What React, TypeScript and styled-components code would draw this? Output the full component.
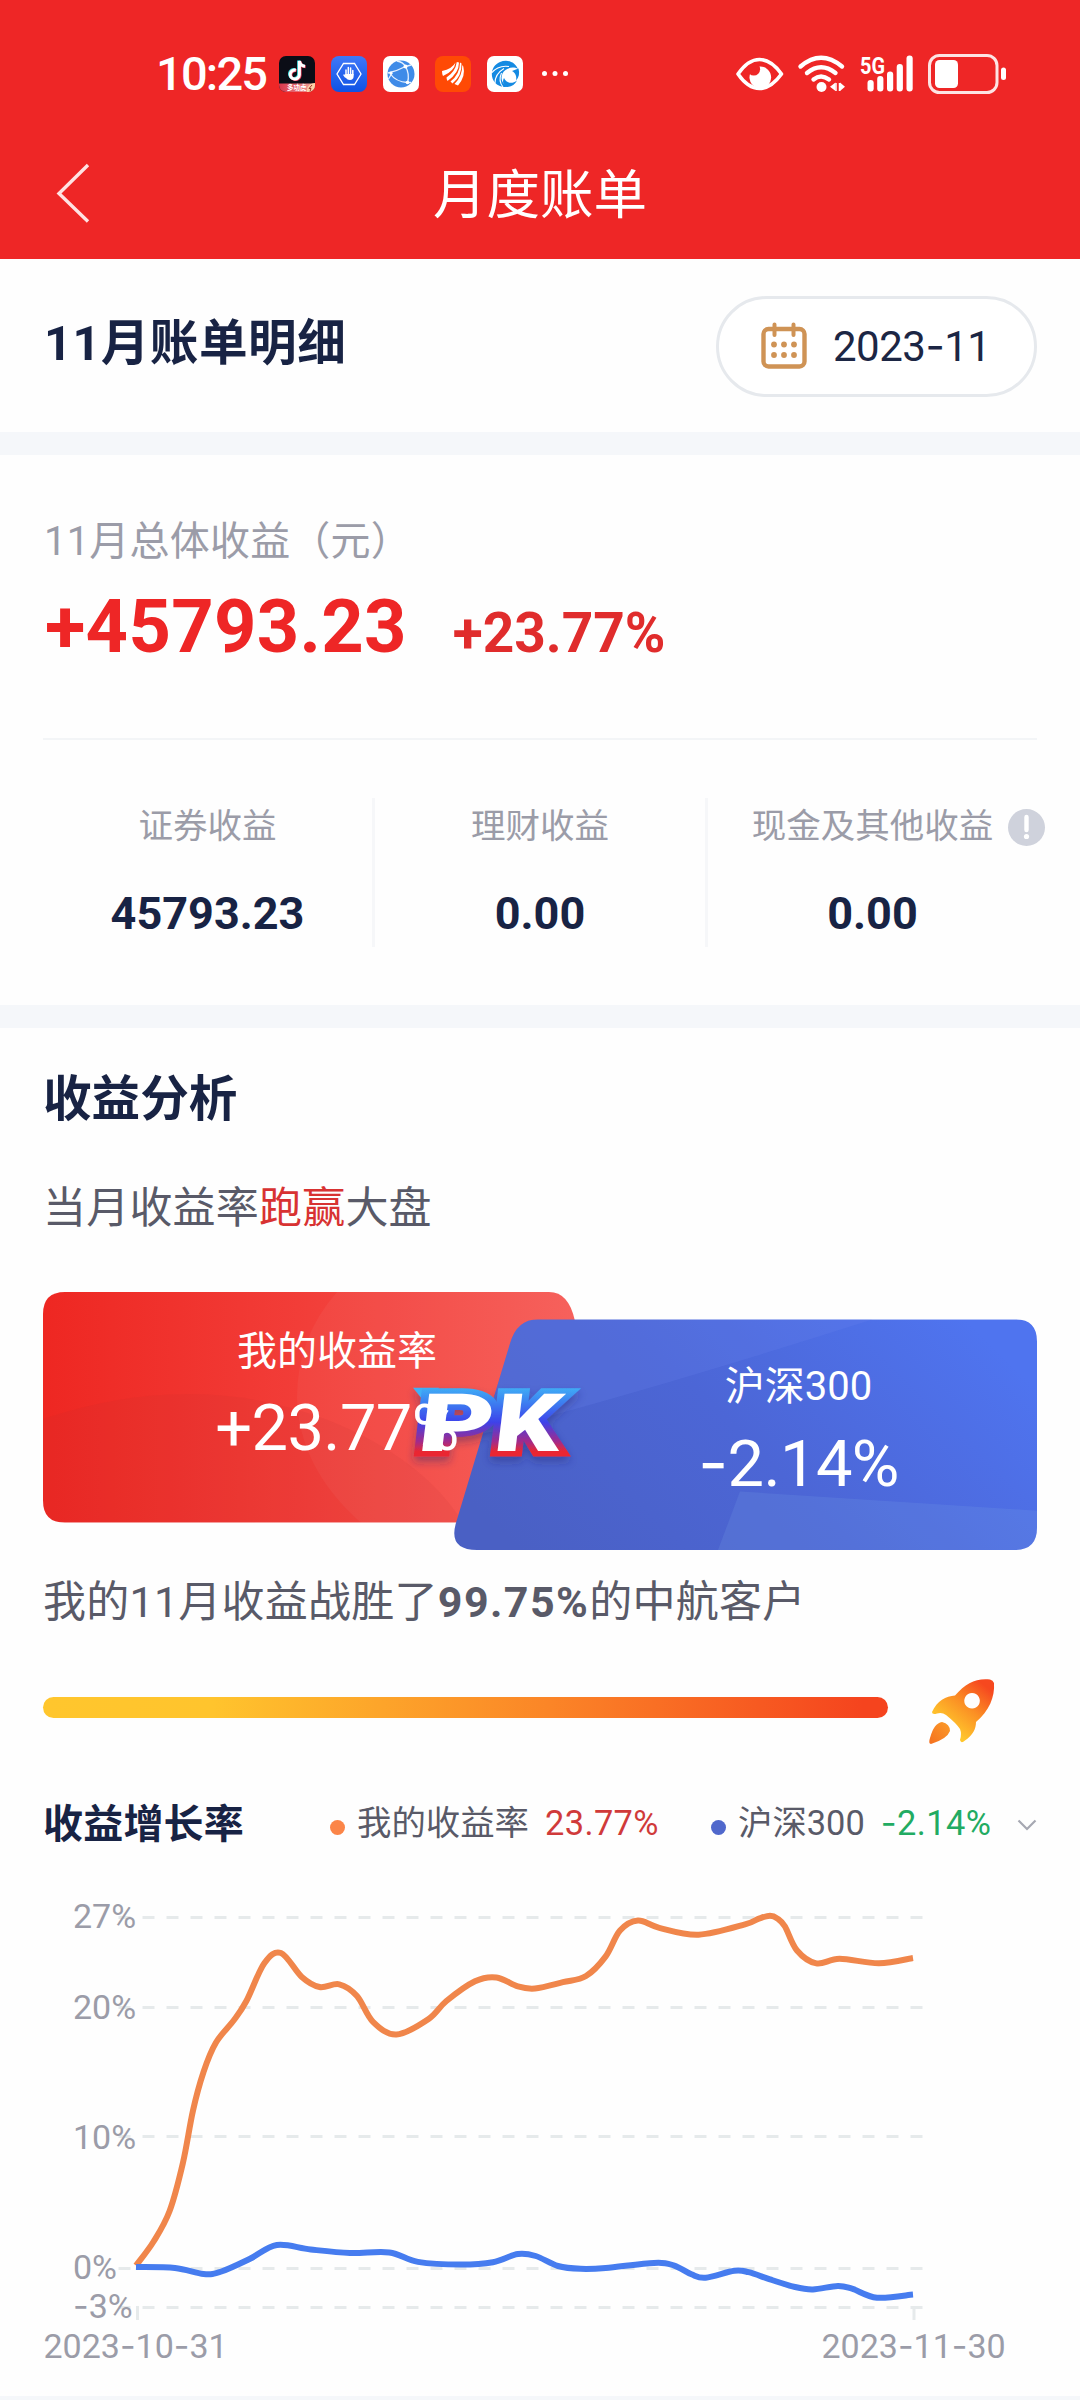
import React from "react";
import styled, { createGlobalStyle } from "styled-components";

const FONT = `Roboto, "Noto Sans CJK SC", sans-serif`;

const GlobalStyle = createGlobalStyle`
  * { box-sizing: border-box; }
  body { margin: 0; background: #fff; font-family: ${FONT}; }
  svg { display: block; flex: none; overflow: visible; }
`;

const Page = styled.main`
  width: 1080px;
  height: 2400px;
  overflow: hidden;
  display: flex;
  flex-direction: column;
  background: #fefefe;
  white-space: nowrap;

  > * { flex: none; }
`;

/* ---------- header ---------- */

const Header = styled.header`
  height: 259px;
  background: #ee2626;
  color: #fff;
`;

const StatusBar = styled.div`
  height: 127px;
  padding: 21px 74px 0 156px;
  display: flex;
  align-items: center;
`;

const Clock = styled.div`
  width: 123px;
  font-size: 47px;
  font-weight: 500;
  letter-spacing: -1.8px;
  line-height: 60px;
`;

const AppIcons = styled.div`
  display: flex;
  align-items: center;
  gap: 16px;
`;

const SystemIcons = styled.div`
  display: flex;
  align-items: center;
  gap: 15px;
  margin-left: auto;
`;

const NavBar = styled.div`
  height: 132px;
  padding: 0 55px;
  display: grid;
  grid-template-columns: 40px 1fr 40px;
  align-items: center;
`;

const NavTitle = styled.h1`
  margin: 5px 0 0;
  font-size: 53.5px;
  font-weight: 400;
  line-height: 70px;
  text-align: center;
`;

/* ---------- shared ---------- */

const Band = styled.div`
  height: 23px;
  background: #f5f7fa;
`;

const Heading = styled.h2<{ $size?: number }>`
  margin: 0;
  font-size: ${(p) => p.$size ?? 48.6}px;
  font-weight: 700;
  line-height: 60px;
  color: #182344;
`;

const DashMark = styled.span`
  font-family: Inter, sans-serif;
`;

/* ---------- month picker ---------- */

const MonthSection = styled.section`
  height: 173px;
  padding: 37px 43px 0 44px;
  display: flex;
  justify-content: space-between;
  align-items: flex-start;

  ${Heading} {
    margin-top: 18px;
    letter-spacing: 0.5px;
  }
`;

const MonthPill = styled.button`
  width: 321px;
  height: 101px;
  padding: 0 0 2px 42px;
  display: flex;
  align-items: center;
  gap: 26px;
  border: 3px solid #e6e9ed;
  border-radius: 51px;
  background: #fff;
  color: #1c2644;
  font-family: ${FONT};
  font-size: 42px;
  letter-spacing: -0.5px;
`;

/* ---------- summary ---------- */

const Summary = styled.section`
  height: 550px;
  padding: 57px 43px 0;
`;

const SummaryLabel = styled.div`
  margin-left: 1px;
  font-size: 40px;
  line-height: 60px;
  letter-spacing: 0.2px;
  color: #9b9ca8;
`;

const AmountRow = styled.div`
  margin: 10px 0 0 2px;
  height: 90px;
  display: flex;
  align-items: baseline;
  gap: 46px;
  font-weight: 700;
`;

const Amount = styled.span`
  font-size: 74px;
  line-height: 90px;
  letter-spacing: 0.3px;
  color: #ee2626;
`;

const Rate = styled.span`
  font-size: 55px;
  color: #e02c2c;
`;

const Stats = styled.div`
  margin-top: 66px;
  padding-top: 58px;
  border-top: 2px solid #f3f5f7;
  display: grid;
  grid-template-columns: 329px 333px 332px;
`;

const Stat = styled.div`
  height: 149px;
  text-align: center;

  & + & { border-left: 3px solid #f6f7f9; }
`;

const StatLabel = styled.div`
  position: relative;
  display: inline-block;
  font-size: 34.5px;
  line-height: 56px;
  color: #9b9ca8;

  svg {
    position: absolute;
    left: calc(100% + 15px);
    top: 11px;
  }
`;

const StatValue = styled.div`
  margin-top: 30px;
  font-size: 45px;
  font-weight: 700;
  line-height: 60px;
  color: #182344;
`;

/* ---------- analysis ---------- */

const Analysis = styled.section`
  padding: 42px 43px 0;
`;

const Sentence = styled.p<{ $top: number; $spacing?: number }>`
  margin: ${(p) => p.$top}px 0 0;
  font-size: 43px;
  line-height: 60px;
  color: #595a68;
  letter-spacing: ${(p) => p.$spacing ?? 0}px;

  b { letter-spacing: 1.4px; }
`;

const Win = styled.span`
  color: #d83232;
`;

const Versus = styled.div`
  position: relative;
  margin-top: 54px;
  height: 258px;
  display: flex;
  color: #fff;
`;

const VersusArt = styled.svg`
  position: absolute;
  inset: 0;
`;

const Side = styled.div<{ $width: number; $top: number; $right?: number }>`
  position: relative;
  width: ${(p) => p.$width}px;
  padding: ${(p) => p.$top}px ${(p) => p.$right ?? 0}px 0 0;
  text-align: center;
`;

const SideLabel = styled.div`
  font-size: 40px;
  line-height: 60px;
`;

const SideValue = styled.div`
  margin-top: 6px;
  font-size: 65px;
  line-height: 80px;
  letter-spacing: -0.6px;
`;

const ProgressRow = styled.div`
  margin-top: 47px;
  height: 65px;
  display: flex;
  align-items: center;
  gap: 41px;
`;

const Progress = styled.div`
  width: 845px;
  height: 21px;
  margin-bottom: 8px;
  border-radius: 11px;
  background: linear-gradient(90deg, #ffc62d 0%, #ffc42d 20%, #fb8527 60%, #f5441e 97%);
`;

const LegendRow = styled.div`
  margin-top: 56px;
  height: 50px;
  display: flex;
  align-items: center;
`;

const LegendTitle = styled(Heading)`
  width: 287px;
  line-height: 50px;
  letter-spacing: 0.2px;
`;

const LegendItem = styled.div<{ $width: number }>`
  width: ${(p) => p.$width}px;
  display: flex;
  align-items: center;
  font-size: 34.4px;
  line-height: 50px;
  color: #595a68;
  margin-top: -5px;
`;

const Dot = styled.i<{ $color: string }>`
  width: 15px;
  height: 15px;
  margin: 10px 12px 0 0;
  border-radius: 50%;
  background: ${(p) => p.$color};
`;

const LegendValue = styled.span<{ $color: string }>`
  margin-left: 16px;
  letter-spacing: 0.4px;
  color: ${(p) => p.$color};
`;

const Chart = styled.svg`
  font-family: ${FONT};
  font-size: 34px;
  fill: #9b9ca8;
`;

/* ---------- helpers ---------- */

function Num({ children }: { children: string }) {
  return (
    <>
      {children.split(/(-)/).map((part, i) =>
        part === "-" ? <DashMark key={i}>-</DashMark> : part
      )}
    </>
  );
}

type Point = [number, number];

function smoothPath(points: Point[]) {
  let d = `M${points[0][0]} ${points[0][1]}`;
  for (let i = 0; i < points.length - 1; i++) {
    const p0 = points[i - 1] ?? points[i];
    const p1 = points[i];
    const p2 = points[i + 1];
    const p3 = points[i + 2] ?? p2;
    const c = [
      p1[0] + (p2[0] - p0[0]) / 6,
      p1[1] + (p2[1] - p0[1]) / 6,
      p2[0] - (p3[0] - p1[0]) / 6,
      p2[1] - (p3[1] - p1[1]) / 6,
    ].map((n) => n.toFixed(1));
    d += `C${c[0]} ${c[1]} ${c[2]} ${c[3]} ${p2[0]} ${p2[1]}`;
  }
  return d;
}

/* ---------- chart data ---------- */

const mine: Point[] = [
  [136, 2265.6], [153.6, 2241.5], [169.6, 2211], [182.9, 2163], [192.9, 2111],
  [203.6, 2071.8], [216, 2042.5], [234, 2020], [246.4, 2001], [264.3, 1963.3],
  [281, 1953], [301.8, 1977], [319.6, 1987], [339.3, 1984.3], [357, 1996],
  [373, 2021.8], [396.4, 2034.5], [428.6, 2019], [446.4, 2001], [475, 1981.2],
  [496.4, 1977.4], [517.9, 1986.4], [535, 1988.5], [562.9, 1982.2], [586, 1976],
  [605.7, 1956.4], [620, 1930.6], [637.9, 1920.6], [659.3, 1927.8], [698.6, 1934.7],
  [745, 1924.4], [759, 1918.6], [770, 1915.8], [777.5, 1918.6], [785, 1926.5],
  [796.8, 1950.2], [816.4, 1963.4], [839.6, 1958.8], [878.9, 1963.3], [913, 1958],
];

const index300: Point[] = [
  [136, 2267], [175, 2268], [203.6, 2274], [221.4, 2271.5], [250, 2258.8],
  [276.8, 2245], [310.7, 2249.5], [350, 2253], [389.3, 2252.5], [417.9, 2261.9],
  [460.7, 2264.6], [492.9, 2262.2], [517.9, 2254], [535.7, 2256], [558, 2266],
  [580.7, 2268.8], [605.7, 2268], [653.9, 2262.9], [673.6, 2265.3], [691.4, 2274.3],
  [705.7, 2277.7], [734.3, 2270.8], [748.6, 2272.2], [770, 2279.4], [795, 2287],
  [812.9, 2289.4], [837.9, 2286], [852, 2288.7], [877, 2297.7], [913, 2294.6],
];

const ticks = [
  { label: "27%", y: 1917.5, base: 1928 },
  { label: "20%", y: 2007.5, base: 2019 },
  { label: "10%", y: 2136.5, base: 2148.5 },
  { label: "0%", y: 2268.5, base: 2278.5 },
  { label: "-3%", y: 2307.5, base: 2318 },
];

function SvgNum({ x, y, children }: { x: number; y: number; children: string }) {
  return (
    <text x={x} y={y}>
      {children.split(/(-)/).map((part, i) =>
        part === "-" ? (
          <tspan key={i} fontFamily="Inter">-</tspan>
        ) : (
          part
        )
      )}
    </text>
  );
}

function GrowthChart() {
  return (
    <Chart width="1080" height="546" viewBox="0 1850 1080 546">
      {ticks.map((t) => (
        <line key={t.label} x1="118.5" x2="922.5" y1={t.y} y2={t.y} stroke="#e6eaeb" strokeWidth="3" strokeDasharray="12 12" />
      ))}
      <path d="M137.5 2306V2320M914 2306V2320" stroke="#e6eaeb" strokeWidth="3" />
      {ticks.map((t) => (
        <SvgNum key={t.label} x={73} y={t.base}>{t.label}</SvgNum>
      ))}
      <path d={smoothPath(mine)} fill="none" stroke="#f0864b" strokeWidth="6" strokeLinejoin="round" />
      <path d={smoothPath(index300)} fill="none" stroke="#467cef" strokeWidth="6" strokeLinejoin="round" />
      <SvgNum x={43.5} y={2357.5}>2023-10-31</SvgNum>
      <SvgNum x={821.5} y={2357.5}>2023-11-30</SvgNum>
    </Chart>
  );
}

/* ---------- icons ---------- */

function StatusApps() {
  return (
    <AppIcons>
      <svg width="36" height="36" viewBox="0 0 36 36">
        <defs>
          <clipPath id="tile"><rect width="36" height="36" rx="7" /></clipPath>
          <linearGradient id="ribbon"><stop stopColor="#d8364c" /><stop offset="1" stopColor="#f2a69c" /></linearGradient>
        </defs>
        <g clipPath="url(#tile)">
          <rect width="36" height="36" fill="#0b0d16" />
          <g fill="none" strokeWidth="3">
            <path d="M16 13.500a4.600 4.600 0 1 0 3.600 4.600V4.500c.6 3.300 2.500 5 5.600 5.300" stroke="#35d5d8" />
            <path d="M17.500 14.500a4.600 4.600 0 1 0 3.600 4.600V5.500c.6 3.300 2.500 5 5.600 5.300" stroke="#f0425e" />
            <path d="M16.800 14a4.600 4.600 0 1 0 3.600 4.600V5c.6 3.300 2.500 5 5.600 5.300" stroke="#fff" />
          </g>
          <path d="M0 27.500H36V36H0Z" fill="url(#ribbon)" />
          <path d="M28 36c-1-5 3-9 8-9v9z" fill="#fbd3a8" />
          <path d="M33 29l-3 3.500h2l-1 3" stroke="#a3342c" fill="none" />
          <text x="8" y="34" fontSize="6.500" fontWeight="700" fill="#fff">多功虎</text>
        </g>
      </svg>
      <svg width="36" height="36" viewBox="0 0 36 36">
        <defs><linearGradient id="guard" x2="0" y2="1"><stop stopColor="#3f78f8" /><stop offset="1" stopColor="#0f52e4" /></linearGradient></defs>
        <rect width="36" height="36" rx="8" fill="url(#guard)" />
        <path d="M12.500 7.500h11L30 18l-6.500 10.500h-11L6 18z" fill="none" stroke="#fff" strokeWidth="1.300" />
        <path d="M15 19v-5M17.300 18v-6.500M19.600 18v-6M21.800 19v-4.500M14.500 21l-1.500-2" stroke="#fff" strokeWidth="1.500" strokeLinecap="round" />
        <path d="M14.200 18h8.400v2.500c0 2-1.300 3.500-3.600 3.500-2.500 0-3.600-1-4.800-3.500z" fill="#fff" />
      </svg>
      <svg width="36" height="36" viewBox="0 0 36 36">
        <rect width="36" height="36" rx="7" fill="#fff" />
        <circle cx="18" cy="18" r="13.500" fill="#3f8be8" />
        <g fill="none" stroke="#e6f1ff" strokeWidth="1.300">
          <path d="M5 17Q14 15 22.500 10.500M22.500 10.500Q27 18 24.500 27M7 17.500Q13 26 24.500 26.500M22.500 10.500Q20 6 14 5M22.500 10.500L28 9M24.500 26.500L28 26.500M9 17L5.500 23" />
        </g>
        <circle cx="22.500" cy="10.500" r="2" fill="#fff" /><circle cx="8" cy="17" r="1.600" fill="#fff" /><circle cx="24.500" cy="26.500" r="1.800" fill="#fff" />
      </svg>
      <svg width="36" height="36" viewBox="0 0 36 36">
        <rect width="36" height="36" rx="8" fill="#ff4a05" />
        <g fill="#fff">
          <path d="M7 15Q17 13 20.500 6.500Q19.500 15 8 20Q7 18 7 15Z" />
          <path d="M24 6.500Q24 17 12.500 25Q11.500 23 11.500 21.500Q20.500 15.500 21.800 6Z" />
          <path d="M26.500 7.500Q27 20 17.500 27.500L15.500 25.500Q25 18 25 6.500Z" />
          <path d="M28.300 10.500Q31 20 23 29.500L19.500 28Q27.500 20 27.300 9Z" />
        </g>
      </svg>
      <svg width="36" height="36" viewBox="0 0 36 36">
        <rect width="36" height="36" rx="7" fill="#fff" />
        <path d="M31 13C28 5.500 20 3 13 6 5 9.500 3 18 6.500 24.500 9.500 30 16 32 22 30.500 15.500 29 13 23 15.500 17.500 18 12 26 10 31 13Z" fill="#148ae2" />
        <path d="M17 22c2 5 8 6.500 13 2.500-2 4-5.500 6.500-10 6.500-4-2-5-5.500-3-9z" fill="#148ae2" />
        <path d="M31.500 12.500c1.300 5 .5 9-2.500 12 1-4-.5-7.500-4-9.500z" fill="#148ae2" />
        <path d="M4.500 17Q11 9 22 10.500M8 27Q8 18 17 12.500M16 31Q11 25 14.500 17" stroke="#fff" strokeWidth="1.100" fill="none" />
      </svg>
      <svg width="36" height="36" viewBox="0 0 36 36" fill="#fff">
        <circle cx="5.500" cy="17.500" r="2.500" /><circle cx="16" cy="17.500" r="2.500" /><circle cx="26.500" cy="17.500" r="2.500" />
      </svg>
    </AppIcons>
  );
}

function StatusSystem() {
  return (
    <SystemIcons>
      <svg width="47" height="40" viewBox="0 0 47 40">
        <circle cx="24.300" cy="23.300" r="10.800" fill="#fff" />
        <circle cx="17.800" cy="15.300" r="6.300" fill="#ee2626" />
        <path d="M2 20Q12 5.500 23.500 5.500T45.500 20Q35 34.500 23.500 34.500T2 20Z" fill="none" stroke="#fff" strokeWidth="3.600" strokeLinejoin="round" />
      </svg>
      <svg width="47" height="40" viewBox="0 0 47 40">
        <g fill="none" stroke="#fff" strokeWidth="4.400" strokeLinecap="round">
          <path d="M2.500 12.500Q23 -5 44 12.500" /><path d="M9 19Q23 7.500 37.500 19" /><path d="M15.500 25.500Q23 19.500 31 25.500" />
        </g>
        <circle cx="23.500" cy="33" r="5" fill="#fff" />
        <path d="M37.500 28.500v8.500l-5.500-4.200zM42 28.500v8.500l5-4.200z" fill="#fff" />
        <path d="M38 29v8M41.500 29v8" stroke="#fff" strokeWidth="1.500" />
      </svg>
      <svg width="53" height="40" viewBox="0 0 53 40" fill="#fff">
        <text x="0" y="19.500" fontSize="24" fontWeight="700" textLength="25" lengthAdjust="spacingAndGlyphs">5G</text>
        <rect x="7.500" y="26" width="6.200" height="11.500" rx="3" />
        <rect x="17.200" y="22" width="6.200" height="15.500" rx="3" />
        <rect x="27" y="17.500" width="6.200" height="20" rx="3" />
        <rect x="36.700" y="10" width="6.200" height="27.500" rx="3" />
        <rect x="46.500" y="1.500" width="6.200" height="36" rx="3" />
      </svg>
      <svg width="78" height="40" viewBox="0 0 78 40">
        <rect x="1.500" y="1.500" width="67.500" height="37" rx="10" fill="none" stroke="#fff" strokeOpacity=".88" strokeWidth="3" />
        <rect x="7" y="6" width="23" height="28" rx="4.500" fill="#fff" />
        <rect x="73" y="13.500" width="5" height="12.500" rx="2.500" fill="#fff" />
      </svg>
    </SystemIcons>
  );
}

function CalendarIcon() {
  return (
    <svg width="46" height="48" viewBox="0 0 46 48" fill="none" stroke="#cf9355" strokeWidth="4.400" strokeLinecap="round">
      <rect x="2.500" y="7" width="41" height="37.500" rx="5" />
      <path d="M13.500 2.500V13M32.500 2.500V13" strokeWidth="4" />
      <g fill="#cf9355" stroke="none">
        {[22.500, 33].map((y) => [13, 23, 33].map((x) => <circle key={`${x}-${y}`} cx={x} cy={y} r="2.900" />))}
      </g>
    </svg>
  );
}

function VersusBackdrop() {
  return (
    <VersusArt width="994" height="258" viewBox="0 0 994 256" preserveAspectRatio="none">
      <defs>
        <linearGradient id="redCard" x2="1" y2="0"><stop stopColor="#ee2722" /><stop offset=".5" stopColor="#f23e39" /><stop offset="1" stopColor="#f65a55" /></linearGradient>
        <linearGradient id="blueCard" x1="0" y1=".7" x2="1" y2=".3"><stop stopColor="#4a60c4" /><stop offset=".5" stopColor="#4c66d6" /><stop offset="1" stopColor="#4f74ef" /></linearGradient>
        <linearGradient id="pkEdge" gradientUnits="userSpaceOnUse" x1="0" y1="-64" x2="0" y2="6"><stop stopColor="#3fb0f6" /><stop offset=".5" stopColor="#3c43ea" /><stop offset=".78" stopColor="#a32a8a" /><stop offset=".92" stopColor="#ea2830" /></linearGradient>
        <clipPath id="redClip"><path d="M22 0H506Q526 0 532 29L532 229H22Q0 229 0 207V22Q0 0 22 0Z" /></clipPath>
        <clipPath id="blueClip"><path d="M495 27H972Q994 27 994 49V234Q994 256 972 256H434Q405 256 413 229L467 51Q474 27 495 27Z" /></clipPath>
        <filter id="pkShadow" x="-20%" y="-20%" width="140%" height="160%"><feDropShadow dx="0" dy="5" stdDeviation="4" floodColor="#232a70" floodOpacity=".4" /></filter>
      </defs>
      <g clipPath="url(#redClip)">
        <rect width="532" height="229" fill="url(#redCard)" />
        <path d="M294 0Q254 45 254 105Q256 175 318 229H532V0Z" fill="#fff" opacity=".045" />
        <path d="M0 126Q150 76 285 127Q380 165 420 229H0Z" fill="#b83030" opacity=".1" />
      </g>
      <g clipPath="url(#blueClip)">
        <rect x="405" y="27" width="589" height="229" fill="url(#blueCard)" />
        <path d="M405 150Q600 100 830 27H405Z" fill="#6c88ee" opacity=".2" />
        <path d="M697 198L994 217V256H675Z" fill="#77a0e8" opacity=".2" />
      </g>
      <g filter="url(#pkShadow)" fontFamily="Roboto" fontWeight="900" fontSize="80" fill="#fff" stroke="url(#pkEdge)" strokeWidth="11" strokeLinejoin="miter" strokeMiterlimit="3" paintOrder="stroke">
        <path d="M370 95H396L384 112Z" fill="#3fb0f6" stroke="none" />
        <text transform="translate(373 158) skewX(-7)" textLength="75" lengthAdjust="spacingAndGlyphs">P</text>
        <text transform="translate(449 158) skewX(-7)" textLength="66" lengthAdjust="spacingAndGlyphs">K</text>
      </g>
    </VersusArt>
  );
}

function Rocket() {
  return (
    <svg width="66" height="66" viewBox="0 0 66 66">
      <defs>
        <linearGradient id="rocket" x1=".85" y1=".1" x2=".3" y2=".8"><stop stopColor="#f6481f" /><stop offset=".5" stopColor="#fb9024" /><stop offset="1" stopColor="#ffc62c" /></linearGradient>
        <linearGradient id="flame" x1="0" y1="1" x2="1" y2="0"><stop stopColor="#f5701f" /><stop offset="1" stopColor="#fb9c29" /></linearGradient>
      </defs>
      <path fillRule="evenodd" d="M61 0.500C47 -1 37 4 26 16.500C17 17 8 22 3 33Q3 36 8 34.500Q13 33 17 36Q27 44 31 50Q33 55 31 61Q32 65 36 61.500C44 56 47 50 47 43C60 32 66 18 65 4Q64 1 61 .5ZM43 14a7.800 7.800 0 1 0 .1 0Z" fill="url(#rocket)" />
      <path d="M13 43Q21 45 21 52Q18 60 2 65Q-1 64.500 1 59Q5 44 13 43Z" fill="url(#flame)" />
    </svg>
  );
}

/* ---------- page ---------- */

export default function App() {
  return (
    <Page>
      <GlobalStyle />
      <Header>
        <StatusBar>
          <Clock>10:25</Clock>
          <StatusApps />
          <StatusSystem />
        </StatusBar>
        <NavBar>
          <svg width="36" height="60" viewBox="0 0 36 60" fill="none" stroke="#ffe3e3" strokeWidth="3.400">
            <path d="M33 2L4 30.500L33 58.500" />
          </svg>
          <NavTitle>月度账单</NavTitle>
        </NavBar>
      </Header>

      <MonthSection>
        <Heading>11月账单明细</Heading>
        <MonthPill>
          <CalendarIcon />
          <span><Num>2023-11</Num></span>
        </MonthPill>
      </MonthSection>
      <Band />

      <Summary>
        <SummaryLabel>11月总体收益（元）</SummaryLabel>
        <AmountRow>
          <Amount>+45793.23</Amount>
          <Rate>+23.77%</Rate>
        </AmountRow>
        <Stats>
          <Stat>
            <StatLabel>证券收益</StatLabel>
            <StatValue>45793.23</StatValue>
          </Stat>
          <Stat>
            <StatLabel>理财收益</StatLabel>
            <StatValue>0.00</StatValue>
          </Stat>
          <Stat>
            <StatLabel>
              现金及其他收益
              <svg width="37" height="37" viewBox="0 0 37 37">
                <circle cx="18.500" cy="18.500" r="18.500" fill="#cfd2dc" />
                <path d="M18.500 8V21" stroke="#fff" strokeWidth="4.400" strokeLinecap="round" />
                <circle cx="18.500" cy="27.500" r="2.600" fill="#fff" />
              </svg>
            </StatLabel>
            <StatValue>0.00</StatValue>
          </Stat>
        </Stats>
      </Summary>
      <Band />

      <Analysis>
        <Heading>收益分析</Heading>
        <Sentence $top={48} $spacing={0.2}>当月收益率<Win>跑赢</Win>大盘</Sentence>
        <Versus>
          <VersusBackdrop />
          <Side $width={588} $top={30}>
            <SideLabel>我的收益率</SideLabel>
            <SideValue>+23.77%</SideValue>
          </Side>
          <Side $width={406} $top={65} $right={71}>
            <SideLabel>沪深300</SideLabel>
            <SideValue><Num>-2.14%</Num></SideValue>
          </Side>
        </Versus>
        <Sentence $top={22} $spacing={0.25}>我的11月收益战胜了<b>99.75%</b>的中航客户</Sentence>
        <ProgressRow>
          <Progress />
          <Rocket />
        </ProgressRow>
        <LegendRow>
          <LegendTitle $size={40}>收益增长率</LegendTitle>
          <LegendItem $width={381}>
            <Dot $color="#fb8548" />
            我的收益率
            <LegendValue $color="#d03a3a">23.77%</LegendValue>
          </LegendItem>
          <LegendItem $width={306}>
            <Dot $color="#5068cc" />
            沪深300
            <LegendValue $color="#22ab62"><Num>-2.14%</Num></LegendValue>
          </LegendItem>
          <svg width="20" height="12" viewBox="0 0 20 12" fill="none" stroke="#a6a8b2" strokeWidth="2.200">
            <path d="M1.500 1.500L10 10L18.500 1.500" />
          </svg>
        </LegendRow>
      </Analysis>
      <GrowthChart />
      <Band />
    </Page>
  );
}
